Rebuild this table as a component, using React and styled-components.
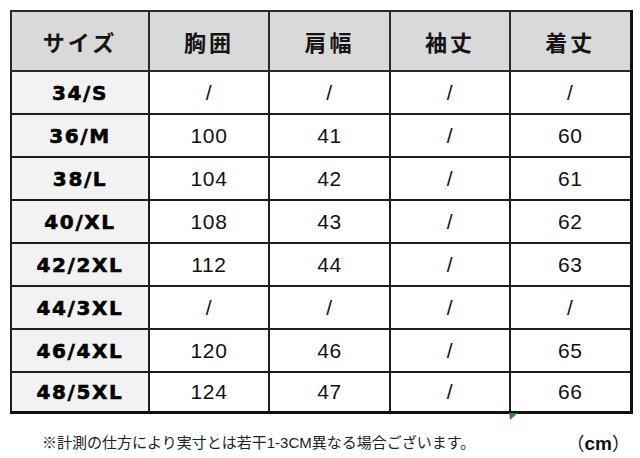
import styled, { createGlobalStyle } from 'styled-components'

const GlobalStyle = createGlobalStyle`
  html, body {
    margin: 0;
    padding: 0;
    background: #ffffff;
  }
  body {
    font-family: "Liberation Sans", "Noto Sans CJK JP", sans-serif;
    color: #111;
  }
`

const headers = ['サイズ', '胸囲', '肩幅', '袖丈', '着丈']

const rows = [
  ['34/S', '/', '/', '/', '/'],
  ['36/M', '100', '41', '/', '60'],
  ['38/L', '104', '42', '/', '61'],
  ['40/XL', '108', '43', '/', '62'],
  ['42/2XL', '112', '44', '/', '63'],
  ['44/3XL', '/', '/', '/', '/'],
  ['46/4XL', '120', '46', '/', '65'],
  ['48/5XL', '124', '47', '/', '66'],
]

const colWidths = [138, 120, 121, 120, 121]

const App = () => {
  return (
    <Page>
      <GlobalStyle />
      <TableWrap>
        <Table>
          <colgroup>
            {colWidths.map((w, i) => (
              <col key={i} style={{ width: w }} />
            ))}
          </colgroup>
          <thead>
            <tr>
              {headers.map((h) => (
                <HeadCell key={h}>{h}</HeadCell>
              ))}
            </tr>
          </thead>
          <tbody>
            {rows.map((r, ri) => (
              <Row key={r[0]} $last={ri === rows.length - 1}>
                <SizeCell>{r[0]}</SizeCell>
                {r.slice(1).map((v, i) => (
                  <Cell key={i}>{v}</Cell>
                ))}
              </Row>
            ))}
          </tbody>
        </Table>
        <Mark viewBox="0 0 10 8">
          <polygon points="0,0 10,0 1,8" fill="#2e8b2e" />
        </Mark>
      </TableWrap>
      <Footer>
        <Note>
          ※計測の仕方により実寸とは若干<Latin>1-3CM</Latin>異なる場合ございます。
        </Note>
        <Unit>
          （<b>cm</b>）
        </Unit>
      </Footer>
    </Page>
  )
}

export default App

const Page = styled.div`
  width: 640px;
  height: 458px;
  padding: 10px 0 0 10px;
  box-sizing: border-box;
  display: flex;
  flex-direction: column;
`

const TableWrap = styled.div`
  position: relative;
  width: 621px;
`

const Table = styled.table`
  border-collapse: collapse;
  table-layout: fixed;
  width: 620px;
  border-top: 2px solid #333;
  border-left: 2px solid #333;
  border-right: 3px solid #111;
  border-bottom: 3px solid #111;
`

const HeadCell = styled.th`
  height: 58px;
  padding: 0;
  background: #d9d9d9;
  border: 2px solid #2a2a2a;
  font-family: "Noto Sans CJK JP", "Liberation Sans", sans-serif;
  font-weight: 700;
  font-size: 22px;
  letter-spacing: 3px;
  text-align: center;
  vertical-align: middle;
  color: #141414;
`

const Row = styled.tr`
  height: ${(p) => (p.$last ? '40px' : '43px')};
`

const SizeCell = styled.td`
  padding: 0;
  background: #f2f2f2;
  border: 2px solid #1e1e1e;
  font-family: "DejaVu Sans", "Liberation Sans", sans-serif;
  font-weight: 700;
  font-size: 20px;
  letter-spacing: 1.6px;
  -webkit-text-stroke: 0.6px #000;
  text-align: center;
  vertical-align: middle;
  color: #000;
`

const Cell = styled.td`
  padding: 0;
  background: #ffffff;
  border: 2px solid #1e1e1e;
  font-family: "Liberation Sans", sans-serif;
  font-weight: 400;
  font-size: 21px;
  letter-spacing: 0.6px;
  text-align: center;
  vertical-align: middle;
  color: #111;
`

const Mark = styled.svg`
  position: absolute;
  left: 499px;
  bottom: -6px;
  width: 9px;
  height: 7px;
`

const Footer = styled.div`
  display: flex;
  align-items: center;
  justify-content: space-between;
  width: 620px;
  margin-top: 15px;
  padding-left: 32px;
  box-sizing: border-box;
`

const Note = styled.span`
  font-family: "Noto Sans CJK JP", sans-serif;
  font-size: 15px;
  color: #222;
`

const Latin = styled.span`
  font-family: "Liberation Sans", sans-serif;
`

const Unit = styled.span`
  font-family: "Noto Sans CJK JP", sans-serif;
  font-size: 18px;
  color: #111;

  b {
    font-family: "Liberation Sans", sans-serif;
    font-weight: 700;
    font-size: 19px;
  }
`
